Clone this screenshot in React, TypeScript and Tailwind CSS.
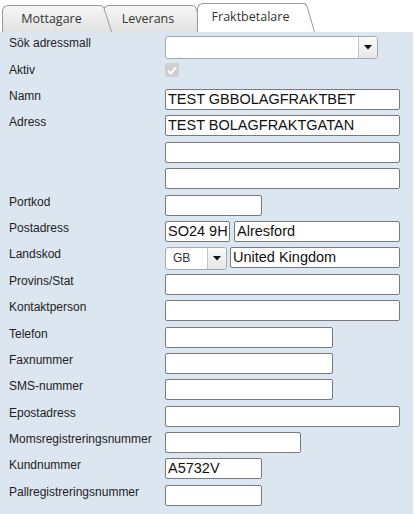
import type { ReactNode } from 'react'

const font = { fontFamily: '"Liberation Sans", Arial, sans-serif' }
const tabFont = { fontFamily: '"Open Sans", "Liberation Sans", sans-serif' }

interface TabProps {
  label: string
  active?: boolean
  bodyClass: string
  id: string
}

function Tab({ label, active, bodyClass, id }: TabProps) {
  const fill = active ? '#ffffff' : `url(#${id})`
  return (
    <div className={`relative flex ${bodyClass}`}>
      <div
        className={`flex items-center justify-center border-l border-t border-[#9a9a9a] rounded-tl-[6px] text-[12.5px] text-[#333] ${
          active ? 'bg-white pb-[2px]' : 'bg-gradient-to-b from-[#f7f7f7] to-[#e2e2e2]'
        } ${active ? 'w-[106px]' : ''}`}
        style={tabFont}
      >
        <span className="px-2 pt-[1px]">{label}</span>
      </div>
      <svg width="12" height="100%" viewBox="0 0 12 27" preserveAspectRatio="none" className="block">
        <defs>
          <linearGradient id={id} x1="0" y1="0" x2="0" y2="1">
            <stop offset="0" stopColor="#f7f7f7" />
            <stop offset="1" stopColor="#e2e2e2" />
          </linearGradient>
        </defs>
        <path d="M0 0 Q3 0 4 3 L12 27 L0 27 Z" fill={fill} />
        <path d="M0 0.5 Q3 0.5 4 3.2 L11.5 27" stroke="#9a9a9a" strokeWidth="1" fill="none" />
      </svg>
    </div>
  )
}

function Row({ label, children, h = 'h-[26.4px]' }: { label: string; children?: ReactNode; h?: string }) {
  return (
    <div className={`flex pl-[9px] ${h}`}>
      <div className="w-[156px] shrink-0 text-[12px] leading-[14px] text-[#222]">{label}</div>
      <div className="flex gap-[4px]">{children}</div>
    </div>
  )
}

function Field({ w, value = '' }: { w: string; value?: string }) {
  return (
    <input
      readOnly
      defaultValue={value}
      className={`${w} h-[21px] rounded-[2px] border border-[#7a7a7a] bg-white px-[2px] text-[14.5px] text-[#111] outline-none`}
      style={font}
    />
  )
}

function Caret() {
  return (
    <svg width="8" height="5" viewBox="0 0 8 5">
      <path d="M0 0 H8 L4 4.5 Z" fill="#111" />
    </svg>
  )
}

export default function App() {
  return (
    <div className="w-[415px] h-[514px] bg-white overflow-hidden" style={font}>
      <div className="flex items-end h-[32px] pl-[2px]">
        <div className="relative z-20 flex h-[27px]">
          <Tab label="Mottagare" id="g1" bodyClass="h-[27px] [&>div:first-child]:w-[98px]" />
        </div>
        <div className="relative z-10 -ml-[9px] flex h-[27px]">
          <Tab label="Leverans" id="g2" bodyClass="h-[27px] [&>div:first-child]:w-[89px]" />
        </div>
        <div className="relative z-30 -ml-[7px] flex h-[29px]">
          <Tab label="Fraktbetalare" id="g3" active bodyClass="h-[29px]" />
        </div>
      </div>

      <div className="w-[413px] min-h-[482px] bg-[#dce6f1] pt-[4px]">
        <Row label="Sök adressmall" h="h-[27px]">
          <div className="flex h-[23px] w-[213px] rounded-[3px] border border-[#a9a9a9] bg-white">
            <div className="flex-1" />
            <div className="flex w-[19px] items-center justify-center rounded-r-[2px] border-l border-[#c4c4c4] bg-gradient-to-b from-[#fafafa] to-[#e6e6e6]">
              <Caret />
            </div>
          </div>
        </Row>
        <Row label="Aktiv" h="h-[26px]">
          <div className="flex h-[14px] w-[14px] items-center justify-center rounded-[2px] bg-[#d0d0d0]">
            <svg width="10" height="9" viewBox="0 0 10 9">
              <path d="M1 4.8 L3.8 7.4 L9 1.4" stroke="#fff" strokeWidth="2" fill="none" />
            </svg>
          </div>
        </Row>
        <Row label="Namn">
          <Field w="w-[235px]" value="TEST GBBOLAGFRAKTBET" />
        </Row>
        <Row label="Adress">
          <Field w="w-[235px]" value="TEST BOLAGFRAKTGATAN" />
        </Row>
        <Row label="">
          <Field w="w-[235px]" />
        </Row>
        <Row label="">
          <Field w="w-[235px]" />
        </Row>
        <Row label="Portkod">
          <Field w="w-[97px]" />
        </Row>
        <Row label="Postadress">
          <Field w="w-[65px]" value="SO24 9H" />
          <Field w="w-[166px]" value="Alresford" />
        </Row>
        <Row label="Landskod">
          <div className="flex gap-[3px]">
            <div className="flex h-[23px] w-[62px] rounded-[3px] border border-[#a9a9a9] bg-white">
              <div className="flex flex-1 items-end pb-[2px] pl-[7px] text-[12px] text-[#333]">GB</div>
              <div className="flex w-[19px] items-center justify-center rounded-r-[2px] border-l border-[#c4c4c4] bg-gradient-to-b from-[#fafafa] to-[#e6e6e6]">
                <Caret />
              </div>
            </div>
            <Field w="w-[170px]" value="United Kingdom" />
          </div>
        </Row>
        <Row label="Provins/Stat">
          <Field w="w-[235px]" />
        </Row>
        <Row label="Kontaktperson">
          <Field w="w-[235px]" />
        </Row>
        <Row label="Telefon">
          <Field w="w-[168px]" />
        </Row>
        <Row label="Faxnummer">
          <Field w="w-[168px]" />
        </Row>
        <Row label="SMS-nummer">
          <Field w="w-[168px]" />
        </Row>
        <Row label="Epostadress">
          <Field w="w-[235px]" />
        </Row>
        <Row label="Momsregistreringsnummer">
          <Field w="w-[136px]" />
        </Row>
        <Row label="Kundnummer">
          <Field w="w-[97px]" value="A5732V" />
        </Row>
        <Row label="Pallregistreringsnummer">
          <Field w="w-[97px]" />
        </Row>
      </div>
    </div>
  )
}
